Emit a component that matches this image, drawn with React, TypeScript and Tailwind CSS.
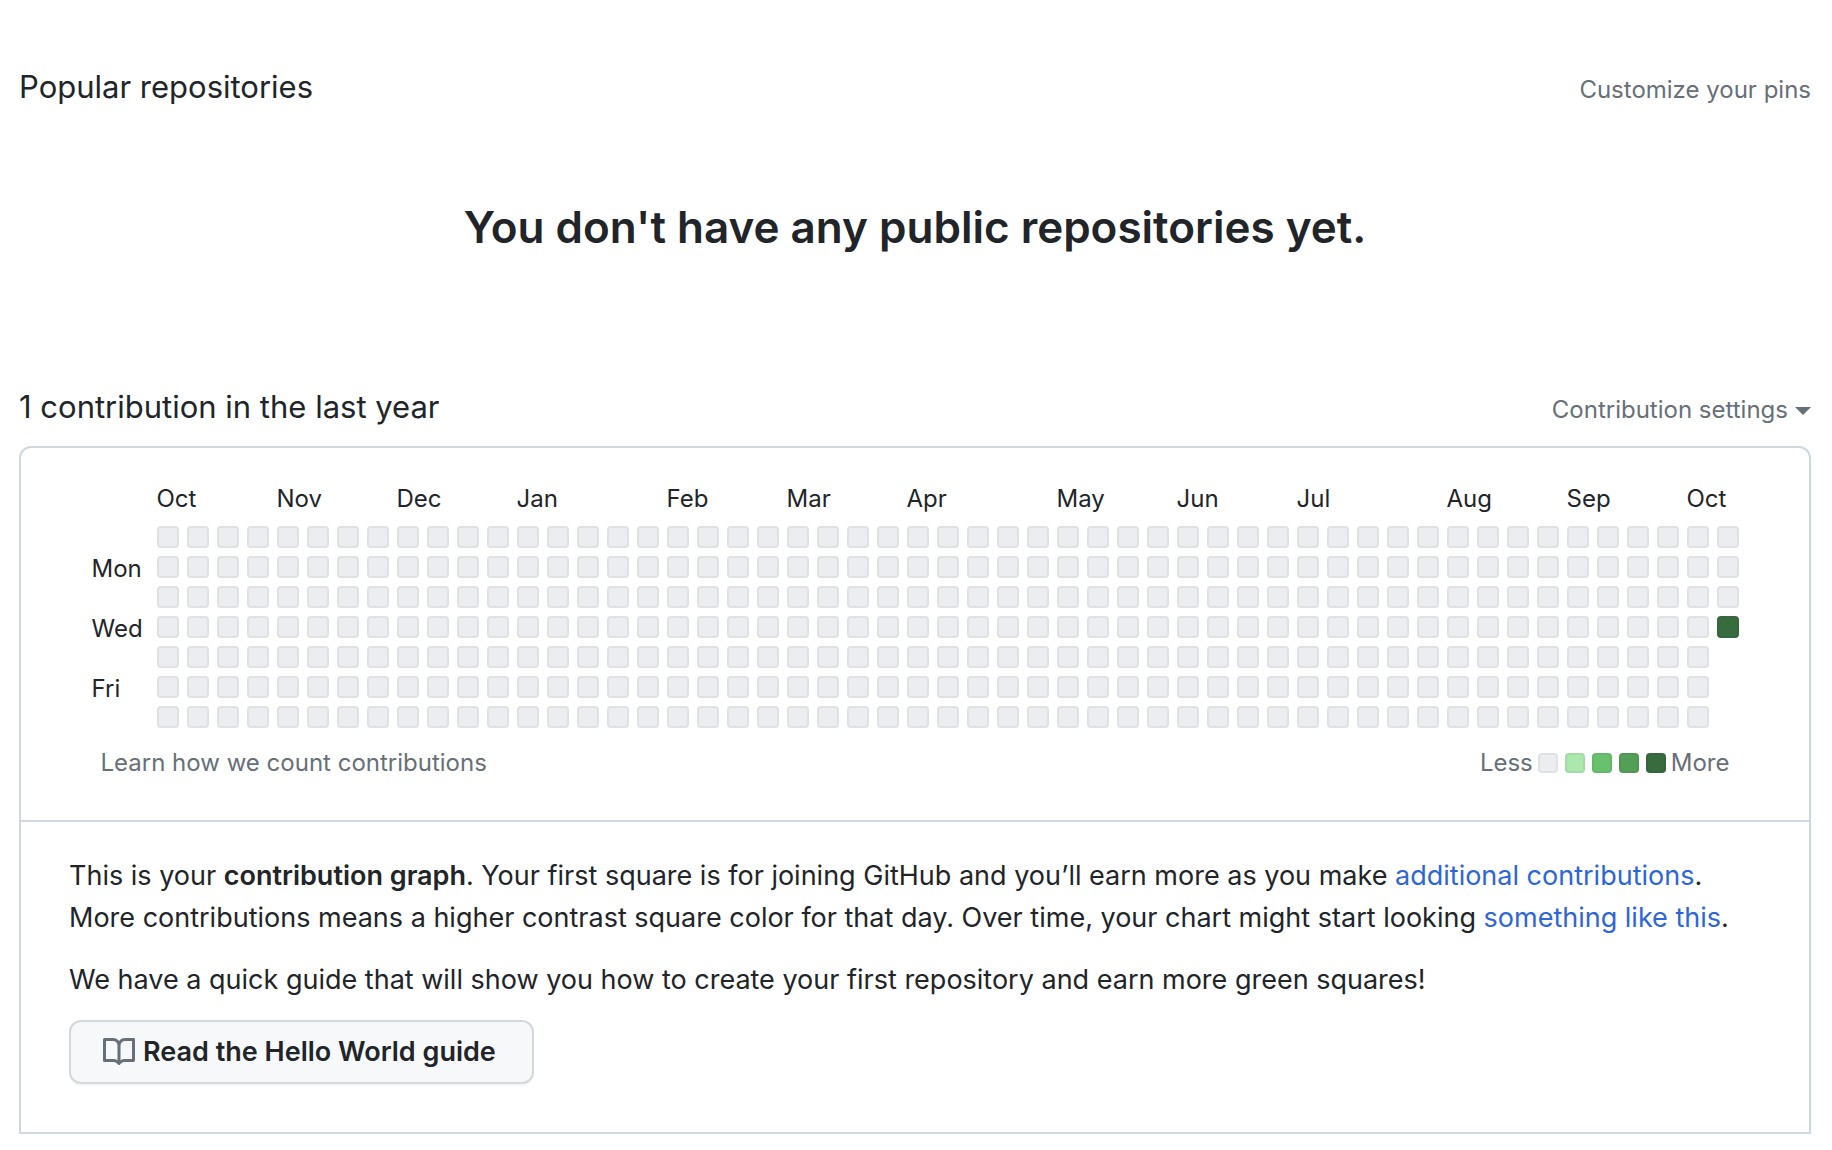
const MONTHS = [
  { name: "Oct", place: "col-start-2" },
  { name: "Nov", place: "col-start-6" },
  { name: "Dec", place: "col-start-10" },
  { name: "Jan", place: "col-start-14" },
  { name: "Feb", place: "col-start-19" },
  { name: "Mar", place: "col-start-23" },
  { name: "Apr", place: "col-start-27" },
  { name: "May", place: "col-start-32" },
  { name: "Jun", place: "col-start-36" },
  { name: "Jul", place: "col-start-40" },
  { name: "Aug", place: "col-start-45" },
  { name: "Sep", place: "col-start-49" },
  { name: "Oct", place: "col-start-53" },
];

const LEVELS = ["bg-[#ebedf0]", "bg-[#ace7ae]", "bg-[#69c16d]", "bg-[#549f57]", "bg-[#386c3e]"];
const DAY_LABELS = ["", "Mon", "", "Wed", "", "Fri", ""];
const WEEKS = Array.from({ length: 53 }, (_, i) => i);
const LAST_WEEK = 52;
const LAST_DAY = 3;

function SectionHeader({ title, children }: { title: string; children: React.ReactNode }) {
  return (
    <div className="flex items-end justify-between">
      <h2 className="text-[31px] leading-[48px]">{title}</h2>
      <div className="text-2xl leading-[42px] text-[#676f78]">{children}</div>
    </div>
  );
}

function ContributionGraph() {
  return (
    <div className="grid grid-cols-[57px_repeat(53,22px)] grid-rows-[35px_repeat(7,22px)] gap-2 text-2xl">
      {MONTHS.map((m) => (
        <span key={m.place} className={`${m.place} row-start-1 w-0 leading-8`}>
          {m.name}
        </span>
      ))}
      {DAY_LABELS.map((label, day) => (
        <div key={day} className="col-span-full grid grid-cols-subgrid">
          <span className="h-[22px] leading-[26px]">{label}</span>
          {WEEKS.filter((w) => w < LAST_WEEK || day <= LAST_DAY).map((w) => (
            <span
              key={w}
              className={`h-[22px] rounded border-2 border-[#1b1f23]/6 ${
                w === LAST_WEEK && day === LAST_DAY ? LEVELS[4] : LEVELS[0]
              }`}
            />
          ))}
        </div>
      ))}
    </div>
  );
}

export default function App() {
  return (
    <main className="bg-white pt-[63px] pr-[21px] pb-4 pl-[19px] font-['Inter',sans-serif] text-[#212529]">
      <SectionHeader title="Popular repositories">
        <a href="#pins">Customize your pins</a>
      </SectionHeader>

      <h3 className="mt-[86px] mb-[126px] text-center text-[44px] leading-[60px] font-semibold">
        You don't have any public repositories yet.
      </h3>

      <SectionHeader title="1 contribution in the last year">
        <button type="button" className="flex items-center gap-[7px]">
          Contribution settings
          <span className="mt-0.5 border-x-8 border-t-8 border-x-transparent border-t-[#676f78]" />
        </button>
      </SectionHeader>

      <section className="mt-[15px] rounded-t-xl border-2 border-[#d1d7de]">
        <div className="flex justify-center border-b-2 border-[#d1d7de] pt-[35px] pb-[39px]">
          <div>
            <ContributionGraph />
            <div className="mt-[17px] flex justify-between px-[9px] text-2xl leading-9 text-[#676f78]">
              <a href="#learn">Learn how we count contributions</a>
              <div className="flex items-center gap-[5px]">
                <span>Less</span>
                <div className="flex gap-[7px]">
                  {LEVELS.map((color) => (
                    <span key={color} className={`size-5 rounded border-2 border-[#1b1f23]/6 ${color}`} />
                  ))}
                </div>
                <span>More</span>
              </div>
            </div>
          </div>
        </div>

        <div className="px-12 pt-[33px] pb-12 text-[27px] leading-[42px]">
          <p>
            This is your <strong className="font-semibold">contribution graph</strong>. Your first square is for joining
            GitHub and you’ll earn more as you make{" "}
            <a href="#additional" className="text-[#2d66d9]">
              additional contributions
            </a>
            .
            <br />
            More contributions means a higher contrast square color for that day. Over time, your chart might start
            looking{" "}
            <a href="#example" className="text-[#2d66d9]">
              something like this
            </a>
            .
          </p>
          <p className="mt-5">
            We have a quick guide that will show you how to create your first repository and earn more green squares!
          </p>
          <a
            href="#guide"
            className="mt-[19px] inline-flex h-16 items-center gap-2 rounded-xl border-2 border-[#d5d8db] bg-[#f6f8fa] pr-9 pl-8 align-top font-semibold shadow-[0_2px_0_rgba(27,31,35,0.04)]"
          >
            <svg viewBox="0 0 16 16" className="size-8 fill-[#676f78]" aria-hidden="true">
              <path
                fillRule="evenodd"
                d="M0 1.75A.75.75 0 01.75 1h4.253c1.227 0 2.317.59 3 1.501A3.744 3.744 0 0111.006 1h4.245a.75.75 0 01.75.75v10.5a.75.75 0 01-.75.75h-4.507a2.25 2.25 0 00-1.591.659l-.622.621a.75.75 0 01-1.06 0l-.622-.621A2.25 2.25 0 005.258 13H.75a.75.75 0 01-.75-.75V1.75zm8.755 3a2.25 2.25 0 012.25-2.25H14.5v9h-3.757c-.71 0-1.4.201-1.992.572l.004-7.322zm-1.504 7.324l.004-5.073-.002-2.253A2.25 2.25 0 005.003 2.5H1.5v9h3.757a3.75 3.75 0 011.994.574z"
              />
            </svg>
            Read the Hello World guide
          </a>
        </div>
      </section>
    </main>
  );
}
